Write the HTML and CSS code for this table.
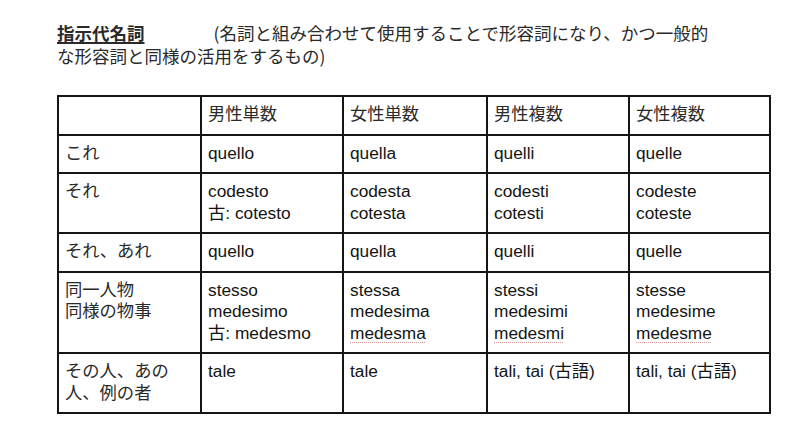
FILE: index.html
```html
<!DOCTYPE html>
<html lang="ja">
<head>
<meta charset="utf-8">
<title>指示代名詞</title>
<link rel="stylesheet" href="styles.css">
</head>
<body>
<div class="page">
  <p class="title"><span class="heading">指示代名詞</span><span class="note">(名詞と組み合わせて使用することで形容詞になり、かつ一般的<br>な形容詞と同様の活用をするもの)</span></p>
  <table class="grid">
    <colgroup>
      <col class="c1"><col class="c2"><col class="c3"><col class="c4"><col class="c5">
    </colgroup>
    <tr class="head">
      <td></td><td>男性単数</td><td>女性単数</td><td>男性複数</td><td>女性複数</td>
    </tr>
    <tr>
      <td>これ</td><td>quello</td><td>quella</td><td>quelli</td><td>quelle</td>
    </tr>
    <tr>
      <td>それ</td><td>codesto<br>古: cotesto</td><td>codesta<br>cotesta</td><td>codesti<br>cotesti</td><td>codeste<br>coteste</td>
    </tr>
    <tr>
      <td>それ、あれ</td><td>quello</td><td>quella</td><td>quelli</td><td>quelle</td>
    </tr>
    <tr>
      <td>同一人物<br>同様の物事</td><td>stesso<br>medesimo<br>古: medesmo</td><td>stessa<br>medesima<br><span class="spell">medesma</span></td><td>stessi<br>medesimi<br><span class="spell">medesmi</span></td><td>stesse<br>medesime<br><span class="spell">medesme</span></td>
    </tr>
    <tr class="last">
      <td>その人、あの<br>人、例の者</td><td>tale</td><td>tale</td><td>tali, tai (古語)</td><td>tali, tai (古語)</td>
    </tr>
  </table>
</div>
</body>
</html>
```

FILE: styles.css
```css
html, body {
  margin: 0;
  padding: 0;
  background: #ffffff;
}

body {
  font-family: "Liberation Sans", "Noto Sans CJK JP", sans-serif;
  color: #1a1a1a;
  font-size: 17.3px;
}

.page {
  padding: 21px 0 0 57px;
}

.title {
  margin: 0;
  font-size: 17.5px;
  line-height: 23px;
  color: #2a2a2a;
  font-family: "Noto Sans CJK JP", "Liberation Sans", sans-serif;
}

.heading {
  font-weight: bold;
  text-decoration: underline;
  text-underline-offset: 2px;
  text-decoration-thickness: 1.5px;
  margin-right: 69px;
}

.grid {
  margin-top: 28px;
  border-collapse: separate;
  border-spacing: 0;
  table-layout: fixed;
  width: 714px;
  border-top: 2px solid #151515;
  border-left: 2px solid #151515;
}

.c1 { width: 143px; }
.c2 { width: 142px; }
.c3 { width: 144px; }
.c4 { width: 142px; }
.c5 { width: 141px; }

.grid td {
  border-right: 2px solid #151515;
  border-bottom: 2px solid #151515;
  padding: 7px 6px 8px 6px;
  line-height: 21.5px;
  vertical-align: top;
  color: #141414;
  white-space: nowrap;
}

.grid tr td:first-child,
.head td {
  color: #2a2a2a;
}

.spell {
  text-decoration-line: underline;
  text-decoration-style: dotted;
  text-decoration-color: #d49a9a;
  text-decoration-thickness: 1px;
  text-underline-offset: 3px;
}
```
